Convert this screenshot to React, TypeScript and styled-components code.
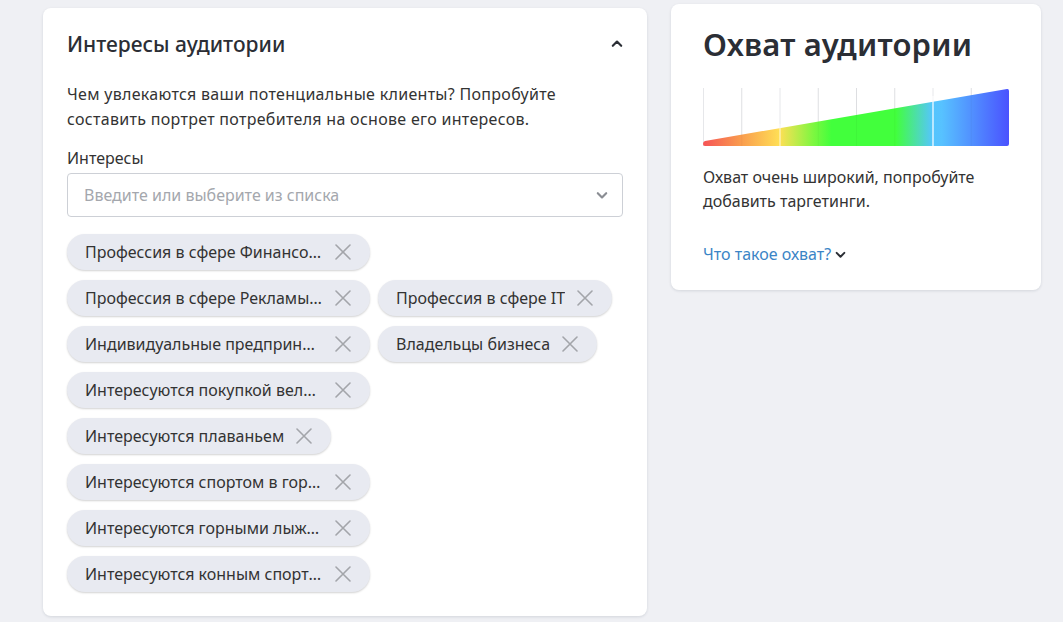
import React from "react";
import styled, { createGlobalStyle } from "styled-components";

const GlobalStyle = createGlobalStyle`
  html, body {
    margin: 0;
    padding: 0;
    background: #eff0f4;
    font-family: "Noto Sans", "Open Sans", Arial, sans-serif;
    color: #333;
  }
`;

const Page = styled.div`
  display: flex;
  align-items: flex-start;
  gap: 24px;
  padding-left: 43px;
  width: 1063px;
  height: 622px;
  box-sizing: border-box;
  overflow: hidden;
`;

const Card = styled.section<{ $top: number; $width: number }>`
  margin-top: ${p => p.$top}px;
  width: ${p => p.$width}px;
  box-sizing: border-box;
  background: #fff;
  border-radius: 8px;
  box-shadow: 0 1px 3px rgba(20, 30, 60, 0.12);
`;

const InterestsCard = styled(Card)`
  padding: 24px 24px 24px;
`;

const ReachCard = styled(Card)`
  padding: 20px 32px 24px;
`;

const Header = styled.div`
  display: flex;
  align-items: center;
  justify-content: space-between;
  height: 24px;
`;

const Title = styled.h2`
  margin: 0;
  font-size: 21px;
  line-height: 24px;
  font-weight: 500;
  color: #2b2e35;
`;

const Description = styled.p`
  margin: 26px 0 0;
  font-size: 16px;
  line-height: 25px;
  letter-spacing: 0.3px;
  color: #333;
`;

const Label = styled.div`
  margin-top: 15px;
  font-size: 16px;
  line-height: 22px;
  color: #333;
`;

const Select = styled.div`
  margin-top: 4px;
  height: 44px;
  box-sizing: border-box;
  border: 1px solid #cdd0d6;
  border-radius: 4px;
  display: flex;
  align-items: center;
  justify-content: space-between;
  padding: 0 14px 0 16px;
  font-size: 16px;
  color: #a4a7ad;
`;

const Chips = styled.div`
  margin-top: 17px;
  display: flex;
  flex-wrap: wrap;
  gap: 10px 8px;
`;

const Chip = styled.div`
  display: inline-flex;
  align-items: center;
  height: 36px;
  box-sizing: border-box;
  padding: 0 19px 0 18px;
  border-radius: 18px;
  background: #e8eaf1;
  box-shadow: 0 1px 2px rgba(0, 0, 0, 0.18);
  font-size: 16px;
  color: #333;
`;

const ChipText = styled.span`
  max-width: 238px;
  white-space: nowrap;
  overflow: hidden;
  text-overflow: ellipsis;
`;

const RemoveButton = styled.span`
  display: inline-flex;
  margin-left: 12px;
  width: 16px;
  height: 16px;
`;

const ReachTitle = styled.h2`
  margin: 0;
  font-size: 31px;
  line-height: 40px;
  font-weight: 600;
  letter-spacing: 0.2px;
  color: #2b2e35;
`;

const Chart = styled.div`
  margin-top: 24px;
  width: 306px;
  height: 58px;
`;

const ReachText = styled.p`
  margin: 19px 0 0;
  font-size: 16px;
  line-height: 24px;
  color: #333;
`;

const Link = styled.a`
  display: inline-flex;
  align-items: center;
  gap: 4px;
  margin-top: 29px;
  font-size: 16px;
  line-height: 24px;
  color: #3b85c6;
  text-decoration: none;
`;

const interests = [
  "Профессия в сфере Финансовых услуг",
  "Профессия в сфере Рекламы и маркетинга",
  "Профессия в сфере IT",
  "Индивидуальные предприниматели",
  "Владельцы бизнеса",
  "Интересуются покупкой велосипеда",
  "Интересуются плаваньем",
  "Интересуются спортом в горах",
  "Интересуются горными лыжами",
  "Интересуются конным спортом",
];

const CloseIcon = () => (
  <svg width="16" height="16" viewBox="0 0 16 16">
    <path d="M1 1L15 15M15 1L1 15" stroke="#a3a5aa" strokeWidth="1.6" strokeLinecap="round" />
  </svg>
);

const Chevron = ({ up, color, size }: { up?: boolean; color: string; size: number }) => (
  <svg width={size} height={size} viewBox="0 0 10 10">
    <path
      d={up ? "M1.5 6.5L5 3L8.5 6.5" : "M1.5 3.5L5 7L8.5 3.5"}
      fill="none"
      stroke={color}
      strokeWidth="1.8"
      strokeLinecap="round"
      strokeLinejoin="round"
    />
  </svg>
);

const ReachChart = () => {
  const w = 306;
  const h = 58;
  const cols = 8;
  const step = w / cols;
  return (
    <svg width={w} height={h} viewBox={`0 0 ${w} ${h}`}>
      <defs>
        <linearGradient id="reach" x1="0" y1="0" x2="1" y2="0">
          <stop offset="0" stopColor="#f65356" />
          <stop offset="0.12" stopColor="#f99a4e" />
          <stop offset="0.25" stopColor="#ffdf55" />
          <stop offset="0.36" stopColor="#7ef740" />
          <stop offset="0.42" stopColor="#42ff3c" />
          <stop offset="0.63" stopColor="#42ff3c" />
          <stop offset="0.75" stopColor="#55c5fd" />
          <stop offset="0.78" stopColor="#57c2ff" />
          <stop offset="1" stopColor="#4a52ff" />
        </linearGradient>
      </defs>
      {Array.from({ length: cols }, (_, i) => (
        <line key={i} x1={i * step + 0.5} y1="0" x2={i * step + 0.5} y2={h} stroke="#e6e7ea" strokeWidth="1" />
      ))}
      <path d={`M2 ${h - 5} L${w - 2} 1 Q${w} 0.6 ${w} 3 L${w} ${h - 2} Q${w} ${h} ${w - 2} ${h} L2 ${h} Q0 ${h} 0 ${h - 2} Q0 ${h - 4.6} 2 ${h - 5} Z`} fill="url(#reach)" />
      <line x1={2 * step + 0.5} y1="36" x2={2 * step + 0.5} y2={h} stroke="#ffffff" strokeOpacity="0.8" strokeWidth="1" />
      <line x1={6 * step + 0.5} y1="8" x2={6 * step + 0.5} y2={h} stroke="#ffffff" strokeWidth="1.2" />
      {[1, 3, 4, 5, 7].map(i => (
        <line key={i} x1={i * step + 0.5} y1="0" x2={i * step + 0.5} y2={h} stroke="#000" strokeOpacity="0.035" strokeWidth="1" />
      ))}
    </svg>
  );
};

export default function App() {
  return (
    <>
      <GlobalStyle />
      <Page>
        <InterestsCard $top={8} $width={604}>
          <Header>
            <Title>Интересы аудитории</Title>
            <Chevron up color="#2b2e35" size={12} />
          </Header>
          <Description>
            Чем увлекаются ваши потенциальные клиенты? Попробуйте
            <br />
            составить портрет потребителя на основе его интересов.
          </Description>
          <Label>Интересы</Label>
          <Select>
            <span>Введите или выберите из списка</span>
            <Chevron color="#8a8d93" size={12} />
          </Select>
          <Chips>
            {interests.map(item => (
              <Chip key={item}>
                <ChipText>{item}</ChipText>
                <RemoveButton>
                  <CloseIcon />
                </RemoveButton>
              </Chip>
            ))}
          </Chips>
        </InterestsCard>
        <ReachCard $top={4} $width={370}>
          <ReachTitle>Охват аудитории</ReachTitle>
          <Chart>
            <ReachChart />
          </Chart>
          <ReachText>
            Охват очень широкий, попробуйте
            <br />
            добавить таргетинги.
          </ReachText>
          <Link href="#">
            Что такое охват?
            <Chevron color="#2b2e35" size={11} />
          </Link>
        </ReachCard>
      </Page>
    </>
  );
}
